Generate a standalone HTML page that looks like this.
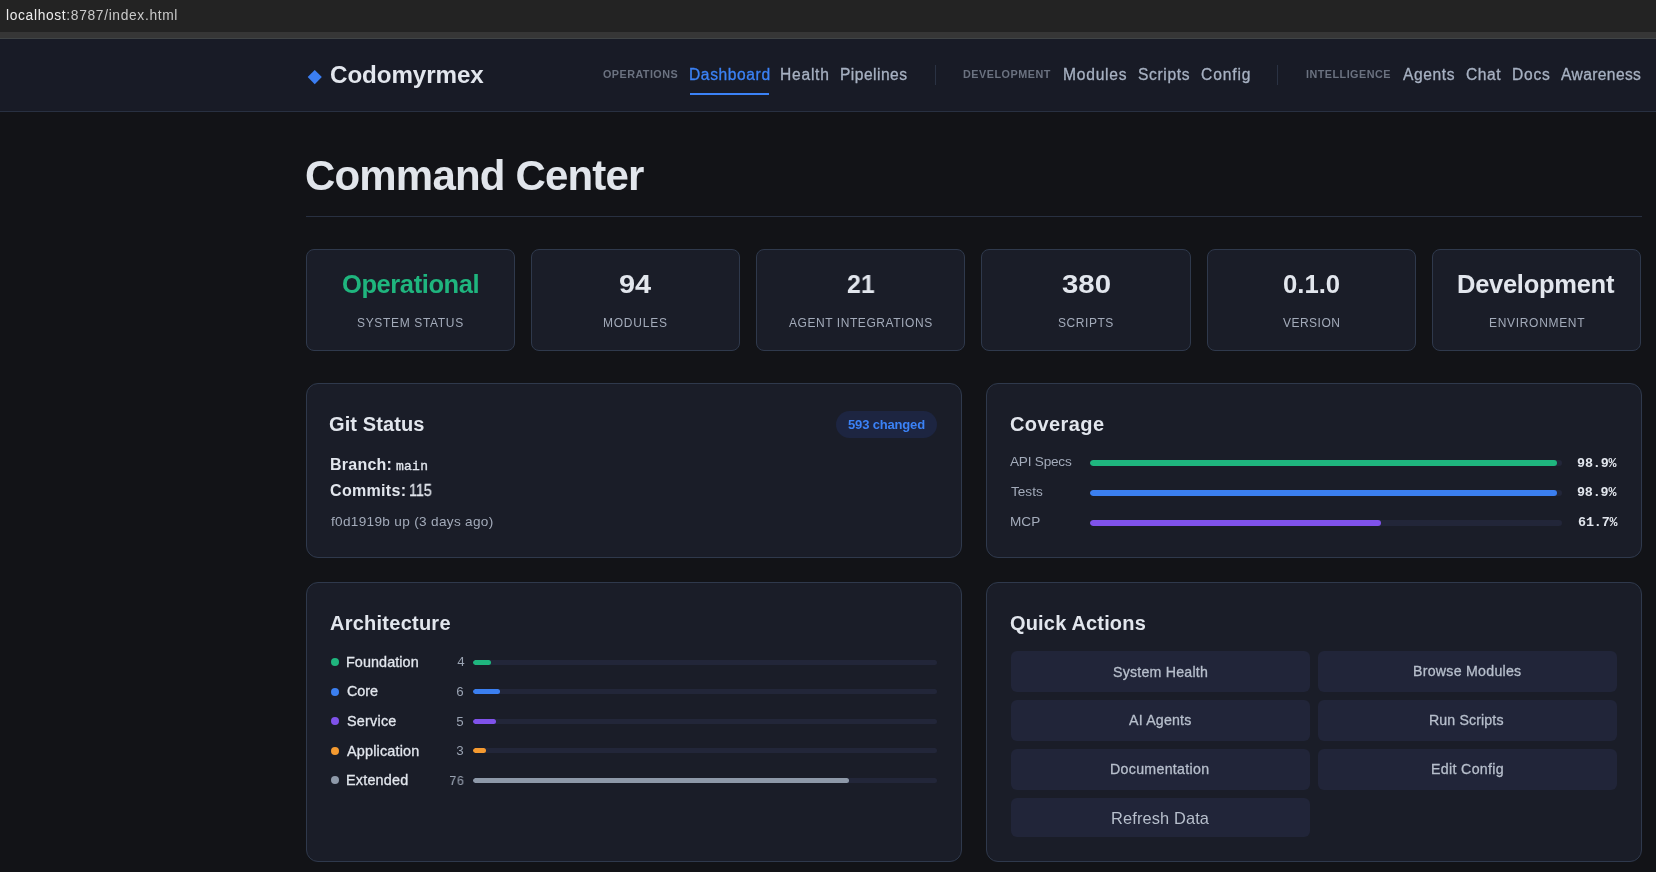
<!DOCTYPE html>
<html><head><meta charset="utf-8"><title>Codomyrmex Command Center</title>
<style>
html,body{margin:0;padding:0}
body{width:1656px;height:872px;overflow:hidden;background:#121317;position:relative;font-family:"Liberation Sans",sans-serif}
.t{position:absolute;white-space:nowrap;line-height:1;will-change:transform}
.a{position:absolute;box-sizing:border-box}
#urlbar{left:0;top:0;width:1656px;height:32px;background:#232323}
#strip{left:0;top:32px;width:1656px;height:6px;background:#363636}
#stripline{left:0;top:38px;width:1656px;height:1px;background:#404446}
#nav{left:0;top:39px;width:1656px;height:73px;background:#181b26;border-bottom:1px solid #283041}
.card{background:#1a1d28;border:1px solid #2f394c}
.stat{top:249px;height:102px;width:209.17px;border-radius:8px}
.panel{border-radius:12px}
.track{background:#222639;border-radius:3px;overflow:hidden}
.fill{position:absolute;left:0;top:0;bottom:0;border-radius:3px}
.dot{width:8px;height:8px;border-radius:50%}
.btn{background:#212539;border-radius:6px;width:299px}
</style></head>
<body>
<div id="urlbar" class="a " style=""></div>
<div id="strip" class="a " style=""></div>
<div id="stripline" class="a " style=""></div>
<div id="nav" class="a " style=""></div>
<div class="a shape" style="left:309.6px;top:71.6px;width:9.5px;height:9.5px;background:#3b7ef2;transform:rotate(45deg)"></div>
<div class="a shape" style="left:690px;top:93px;width:79px;height:2px;background:#3b82f6"></div>
<div class="a shape" style="left:935px;top:65px;width:1px;height:20px;background:#2a3243"></div>
<div class="a shape" style="left:1277px;top:65px;width:1px;height:20px;background:#2a3243"></div>
<div class="a shape" style="left:306px;top:216px;width:1336px;height:1px;background:#283041"></div>
<div class="a card stat" style="left:306px;width:209px"></div>
<div class="a card stat" style="left:531px;width:209px"></div>
<div class="a card stat" style="left:756px;width:209px"></div>
<div class="a card stat" style="left:981px;width:210px"></div>
<div class="a card stat" style="left:1207px;width:209px"></div>
<div class="a card stat" style="left:1432px;width:209px"></div>
<div class="a card panel" style="left:306px;top:383px;width:656px;height:175px"></div>
<div class="a card panel" style="left:986px;top:383px;width:655.5px;height:175px"></div>
<div class="a card panel" style="left:306px;top:582px;width:656px;height:280px"></div>
<div class="a card panel" style="left:986px;top:582px;width:655.5px;height:280px"></div>
<div id="badge" class="a " style="left:836px;top:411px;width:101px;height:27px;border-radius:14px;background:#1d2541"></div>
<div class="a track shape" style="left:1090px;top:460px;width:472px;height:6px"><div class="fill" style="width:98.9%;background:#1fb57e"></div></div>
<div class="a track shape" style="left:1090px;top:490px;width:472px;height:6px"><div class="fill" style="width:98.9%;background:#3b7ff0"></div></div>
<div class="a track shape" style="left:1090px;top:520px;width:472px;height:6px"><div class="fill" style="width:61.7%;background:#7f52ea"></div></div>
<div class="a dot shape" style="left:331px;top:658.00px;background:#1fb57e"></div>
<div class="a track shape" style="left:473px;top:659.70px;width:464px;height:5px"><div class="fill" style="width:18.2px;background:#1fb57e"></div></div>
<div class="a dot shape" style="left:331px;top:687.55px;background:#3b7ff0"></div>
<div class="a track shape" style="left:473px;top:689.25px;width:464px;height:5px"><div class="fill" style="width:27.1px;background:#3b7ff0"></div></div>
<div class="a dot shape" style="left:331px;top:717.10px;background:#7f52ea"></div>
<div class="a track shape" style="left:473px;top:718.80px;width:464px;height:5px"><div class="fill" style="width:23.4px;background:#7f52ea"></div></div>
<div class="a dot shape" style="left:331px;top:746.65px;background:#f59a30"></div>
<div class="a track shape" style="left:473px;top:748.35px;width:464px;height:5px"><div class="fill" style="width:13.1px;background:#f59a30"></div></div>
<div class="a dot shape" style="left:331px;top:776.20px;background:#8e99a9"></div>
<div class="a track shape" style="left:473px;top:777.90px;width:464px;height:5px"><div class="fill" style="width:375.6px;background:#8e99a9"></div></div>
<div class="a btn" style="left:1011px;top:651px;height:41px"></div>
<div class="a btn" style="left:1318px;top:651px;height:41px"></div>
<div class="a btn" style="left:1011px;top:700px;height:41px"></div>
<div class="a btn" style="left:1318px;top:700px;height:41px"></div>
<div class="a btn" style="left:1011px;top:749px;height:41px"></div>
<div class="a btn" style="left:1318px;top:749px;height:41px"></div>
<div class="a btn" style="left:1011px;top:798px;height:39px"></div>
<div id="url" class="t" style='left:6.03px;top:8.71px;font-family:"Liberation Sans", sans-serif;font-weight:400;font-size:13.800px;letter-spacing:0.655px;color:#ececec'>localhost<span style="color:#c9c9c9">:8787/index.html</span></div>
<div id="logo" class="t" style='left:329.94px;top:63.00px;font-family:"Liberation Sans", sans-serif;font-weight:700;font-size:24.200px;letter-spacing:-0.091px;color:#e2e6ed'>Codomyrmex</div>
<div id="ops" class="t" style='left:602.82px;top:68.91px;font-family:"Liberation Sans", sans-serif;font-weight:700;font-size:10.800px;letter-spacing:0.451px;color:#6b7280'>OPERATIONS</div>
<div id="n_dash" class="t" style='left:688.84px;top:67.11px;font-family:"Liberation Sans", sans-serif;font-weight:400;font-size:15.600px;letter-spacing:0.600px;color:#3b82f6;-webkit-text-stroke:0.30px #3b82f6'>Dashboard</div>
<div id="n_health" class="t" style='left:779.84px;top:67.01px;font-family:"Liberation Sans", sans-serif;font-weight:400;font-size:15.600px;letter-spacing:0.758px;color:#a7b1c2;-webkit-text-stroke:0.30px #a7b1c2'>Health</div>
<div id="n_pipe" class="t" style='left:839.97px;top:67.01px;font-family:"Liberation Sans", sans-serif;font-weight:400;font-size:15.600px;letter-spacing:0.457px;color:#a7b1c2;-webkit-text-stroke:0.30px #a7b1c2'>Pipelines</div>
<div id="dev" class="t" style='left:962.57px;top:68.91px;font-family:"Liberation Sans", sans-serif;font-weight:700;font-size:10.800px;letter-spacing:0.513px;color:#6b7280'>DEVELOPMENT</div>
<div id="n_mod" class="t" style='left:1062.66px;top:67.01px;font-family:"Liberation Sans", sans-serif;font-weight:400;font-size:15.600px;letter-spacing:0.777px;color:#a7b1c2;-webkit-text-stroke:0.30px #a7b1c2'>Modules</div>
<div id="n_scr" class="t" style='left:1137.92px;top:67.01px;font-family:"Liberation Sans", sans-serif;font-weight:400;font-size:15.600px;letter-spacing:0.651px;color:#a7b1c2;-webkit-text-stroke:0.30px #a7b1c2'>Scripts</div>
<div id="n_cfg" class="t" style='left:1200.81px;top:67.01px;font-family:"Liberation Sans", sans-serif;font-weight:400;font-size:15.600px;letter-spacing:0.893px;color:#a7b1c2;-webkit-text-stroke:0.30px #a7b1c2'>Config</div>
<div id="intel" class="t" style='left:1306.21px;top:68.91px;font-family:"Liberation Sans", sans-serif;font-weight:700;font-size:10.800px;letter-spacing:0.475px;color:#6b7280'>INTELLIGENCE</div>
<div id="n_agents" class="t" style='left:1402.54px;top:67.01px;font-family:"Liberation Sans", sans-serif;font-weight:400;font-size:15.600px;letter-spacing:0.601px;color:#a7b1c2;-webkit-text-stroke:0.30px #a7b1c2'>Agents</div>
<div id="n_chat" class="t" style='left:1465.95px;top:67.01px;font-family:"Liberation Sans", sans-serif;font-weight:400;font-size:15.600px;letter-spacing:0.543px;color:#a7b1c2;-webkit-text-stroke:0.30px #a7b1c2'>Chat</div>
<div id="n_docs" class="t" style='left:1511.53px;top:67.01px;font-family:"Liberation Sans", sans-serif;font-weight:400;font-size:15.600px;letter-spacing:0.776px;color:#a7b1c2;-webkit-text-stroke:0.30px #a7b1c2'>Docs</div>
<div id="n_aware" class="t" style='left:1561.31px;top:67.01px;font-family:"Liberation Sans", sans-serif;font-weight:400;font-size:15.600px;letter-spacing:0.382px;color:#a7b1c2;-webkit-text-stroke:0.30px #a7b1c2'>Awareness</div>
<div id="h1" class="t" style='left:304.74px;top:155.41px;font-family:"Liberation Sans", sans-serif;font-weight:700;font-size:42.000px;letter-spacing:-0.825px;color:#e1e5eb'>Command Center</div>
<div id="sv0" class="t" style='left:341.52px;top:272.10px;font-family:"Liberation Sans", sans-serif;font-weight:700;font-size:25.500px;letter-spacing:-0.412px;color:#1fb57e'>Operational</div>
<div id="sv1" class="t" style='left:619.18px;top:272.10px;font-family:"Liberation Sans", sans-serif;font-weight:700;font-size:25.500px;letter-spacing:0.000px;color:#e2e6ed;transform:scaleX(1.1353);transform-origin:0 0'>94</div>
<div id="sv2" class="t" style='left:847.46px;top:272.10px;font-family:"Liberation Sans", sans-serif;font-weight:700;font-size:25.500px;letter-spacing:0.000px;color:#e2e6ed;transform:scaleX(0.9751);transform-origin:0 0'>21</div>
<div id="sv3" class="t" style='left:1061.87px;top:272.10px;font-family:"Liberation Sans", sans-serif;font-weight:700;font-size:25.500px;letter-spacing:0.000px;color:#e2e6ed;transform:scaleX(1.1525);transform-origin:0 0'>380</div>
<div id="sv4" class="t" style='left:1282.60px;top:272.10px;font-family:"Liberation Sans", sans-serif;font-weight:700;font-size:25.500px;letter-spacing:0.000px;color:#e2e6ed;transform:scaleX(1.0063);transform-origin:0 0'>0.1.0</div>
<div id="sv5" class="t" style='left:1457.47px;top:272.10px;font-family:"Liberation Sans", sans-serif;font-weight:700;font-size:25.500px;letter-spacing:-0.273px;color:#e2e6ed'>Development</div>
<div id="sl0" class="t" style='left:357.06px;top:317.00px;font-family:"Liberation Sans", sans-serif;font-weight:400;font-size:12.000px;letter-spacing:0.663px;color:#a3abba'>SYSTEM STATUS</div>
<div id="sl1" class="t" style='left:602.90px;top:317.00px;font-family:"Liberation Sans", sans-serif;font-weight:400;font-size:12.000px;letter-spacing:0.762px;color:#a3abba'>MODULES</div>
<div id="sl2" class="t" style='left:788.70px;top:317.00px;font-family:"Liberation Sans", sans-serif;font-weight:400;font-size:12.000px;letter-spacing:0.563px;color:#a3abba'>AGENT INTEGRATIONS</div>
<div id="sl3" class="t" style='left:1057.90px;top:317.00px;font-family:"Liberation Sans", sans-serif;font-weight:400;font-size:12.000px;letter-spacing:0.558px;color:#a3abba'>SCRIPTS</div>
<div id="sl4" class="t" style='left:1282.80px;top:317.00px;font-family:"Liberation Sans", sans-serif;font-weight:400;font-size:12.000px;letter-spacing:0.473px;color:#a3abba'>VERSION</div>
<div id="sl5" class="t" style='left:1488.75px;top:317.00px;font-family:"Liberation Sans", sans-serif;font-weight:400;font-size:12.000px;letter-spacing:0.687px;color:#a3abba'>ENVIRONMENT</div>
<div id="git_t" class="t" style='left:329.48px;top:413.60px;font-family:"Liberation Sans", sans-serif;font-weight:700;font-size:20.000px;letter-spacing:0.115px;color:#e2e6ed'>Git Status</div>
<div id="badge_t" class="t" style='left:847.53px;top:417.90px;font-family:"Liberation Sans", sans-serif;font-weight:700;font-size:13.000px;letter-spacing:-0.164px;color:#3b82f6'>593 changed</div>
<div id="branch_l" class="t" style='left:330.22px;top:456.91px;font-family:"Liberation Sans", sans-serif;font-weight:700;font-size:16.000px;letter-spacing:0.237px;color:#e2e6ed'>Branch:</div>
<div id="branch_v" class="t" style='left:395.53px;top:459.91px;font-family:"Liberation Mono", monospace;font-weight:400;font-size:13.000px;letter-spacing:0.255px;color:#e2e6ed;-webkit-text-stroke:0.30px #e2e6ed'>main</div>
<div id="commits_l" class="t" style='left:330.21px;top:483.01px;font-family:"Liberation Sans", sans-serif;font-weight:700;font-size:16.000px;letter-spacing:0.324px;color:#e2e6ed'>Commits:</div>
<div id="commits_v" class="t" style='left:409.43px;top:483.01px;font-family:"Liberation Sans", sans-serif;font-weight:400;font-size:16.000px;letter-spacing:0.000px;color:#e2e6ed;-webkit-text-stroke:0.30px #e2e6ed;transform:scaleX(0.8959);transform-origin:0 0'>115</div>
<div id="git_last" class="t" style='left:330.96px;top:514.81px;font-family:"Liberation Sans", sans-serif;font-weight:400;font-size:13.600px;letter-spacing:0.319px;color:#a3abba'>f0d1919b up (3 days ago)</div>
<div id="cov_t" class="t" style='left:1009.83px;top:413.60px;font-family:"Liberation Sans", sans-serif;font-weight:700;font-size:20.000px;letter-spacing:0.420px;color:#e2e6ed'>Coverage</div>
<div id="cov_l0" class="t" style='left:1010.37px;top:454.81px;font-family:"Liberation Sans", sans-serif;font-weight:400;font-size:13.600px;letter-spacing:-0.215px;color:#a3abba'>API Specs</div>
<div id="cov_l1" class="t" style='left:1011.04px;top:484.71px;font-family:"Liberation Sans", sans-serif;font-weight:400;font-size:13.600px;letter-spacing:-0.009px;color:#a3abba'>Tests</div>
<div id="cov_l2" class="t" style='left:1009.70px;top:514.81px;font-family:"Liberation Sans", sans-serif;font-weight:400;font-size:13.600px;letter-spacing:0.045px;color:#a3abba'>MCP</div>
<div id="cov_p0" class="t" style='left:1577.21px;top:456.51px;font-family:"Liberation Mono", monospace;font-weight:700;font-size:13.400px;letter-spacing:-0.152px;color:#e2e6ed'>98.9%</div>
<div id="cov_p1" class="t" style='left:1577.10px;top:486.31px;font-family:"Liberation Mono", monospace;font-weight:700;font-size:13.400px;letter-spacing:-0.175px;color:#e2e6ed'>98.9%</div>
<div id="cov_p2" class="t" style='left:1577.83px;top:516.20px;font-family:"Liberation Mono", monospace;font-weight:700;font-size:13.400px;letter-spacing:-0.141px;color:#e2e6ed'>61.7%</div>
<div id="arch_t" class="t" style='left:330.05px;top:612.80px;font-family:"Liberation Sans", sans-serif;font-weight:700;font-size:20.000px;letter-spacing:0.246px;color:#e2e6ed'>Architecture</div>
<div id="al0" class="t" style='left:345.78px;top:654.50px;font-family:"Liberation Sans", sans-serif;font-weight:400;font-size:14.400px;letter-spacing:0.073px;color:#e2e6ed;-webkit-text-stroke:0.30px #e2e6ed'>Foundation</div>
<div id="al1" class="t" style='left:346.72px;top:683.90px;font-family:"Liberation Sans", sans-serif;font-weight:400;font-size:14.400px;letter-spacing:-0.062px;color:#e2e6ed;-webkit-text-stroke:0.30px #e2e6ed'>Core</div>
<div id="al2" class="t" style='left:346.53px;top:713.72px;font-family:"Liberation Sans", sans-serif;font-weight:400;font-size:14.400px;letter-spacing:0.229px;color:#e2e6ed;-webkit-text-stroke:0.30px #e2e6ed'>Service</div>
<div id="al3" class="t" style='left:346.80px;top:743.60px;font-family:"Liberation Sans", sans-serif;font-weight:400;font-size:14.400px;letter-spacing:0.182px;color:#e2e6ed;-webkit-text-stroke:0.30px #e2e6ed'>Application</div>
<div id="al4" class="t" style='left:345.87px;top:772.72px;font-family:"Liberation Sans", sans-serif;font-weight:400;font-size:14.400px;letter-spacing:0.203px;color:#e2e6ed;-webkit-text-stroke:0.30px #e2e6ed'>Extended</div>
<div id="ac0" class="t" style='left:456.57px;top:656.10px;font-family:"Liberation Mono", monospace;font-weight:400;font-size:13.200px;letter-spacing:0.000px;color:#9aa3b2'>4</div>
<div id="ac1" class="t" style='left:456.47px;top:686.20px;font-family:"Liberation Mono", monospace;font-weight:400;font-size:13.200px;letter-spacing:0.000px;color:#9aa3b2'>6</div>
<div id="ac2" class="t" style='left:456.07px;top:715.70px;font-family:"Liberation Mono", monospace;font-weight:400;font-size:13.200px;letter-spacing:0.000px;color:#9aa3b2'>5</div>
<div id="ac3" class="t" style='left:456.07px;top:745.41px;font-family:"Liberation Mono", monospace;font-weight:400;font-size:13.200px;letter-spacing:0.000px;color:#9aa3b2'>3</div>
<div id="ac4" class="t" style='left:449.42px;top:774.70px;font-family:"Liberation Mono", monospace;font-weight:400;font-size:13.200px;letter-spacing:0.000px;color:#9aa3b2;transform:scaleX(0.9520);transform-origin:0 0'>76</div>
<div id="qa_t" class="t" style='left:1010.39px;top:613.10px;font-family:"Liberation Sans", sans-serif;font-weight:700;font-size:20.000px;letter-spacing:0.170px;color:#e2e6ed'>Quick Actions</div>
<div id="b0" class="t" style='left:1113.04px;top:664.60px;font-family:"Liberation Sans", sans-serif;font-weight:400;font-size:14.200px;letter-spacing:0.216px;color:#b7bfcc;-webkit-text-stroke:0.30px #b7bfcc'>System Health</div>
<div id="b1" class="t" style='left:1412.51px;top:664.40px;font-family:"Liberation Sans", sans-serif;font-weight:400;font-size:14.200px;letter-spacing:0.254px;color:#b7bfcc;-webkit-text-stroke:0.30px #b7bfcc'>Browse Modules</div>
<div id="b2" class="t" style='left:1129.25px;top:713.30px;font-family:"Liberation Sans", sans-serif;font-weight:400;font-size:14.200px;letter-spacing:0.202px;color:#b7bfcc;-webkit-text-stroke:0.30px #b7bfcc'>AI Agents</div>
<div id="b3" class="t" style='left:1428.79px;top:713.20px;font-family:"Liberation Sans", sans-serif;font-weight:400;font-size:14.200px;letter-spacing:0.115px;color:#b7bfcc;-webkit-text-stroke:0.30px #b7bfcc'>Run Scripts</div>
<div id="b4" class="t" style='left:1109.77px;top:762.20px;font-family:"Liberation Sans", sans-serif;font-weight:400;font-size:14.200px;letter-spacing:0.306px;color:#b7bfcc;-webkit-text-stroke:0.30px #b7bfcc'>Documentation</div>
<div id="b5" class="t" style='left:1430.51px;top:762.20px;font-family:"Liberation Sans", sans-serif;font-weight:400;font-size:14.200px;letter-spacing:0.335px;color:#b7bfcc;-webkit-text-stroke:0.30px #b7bfcc'>Edit Config</div>
<div id="b6" class="t" style='left:1110.74px;top:810.11px;font-family:"Liberation Sans", sans-serif;font-weight:400;font-size:16.400px;letter-spacing:0.125px;color:#b7bfcc'>Refresh Data</div>
</body></html>
